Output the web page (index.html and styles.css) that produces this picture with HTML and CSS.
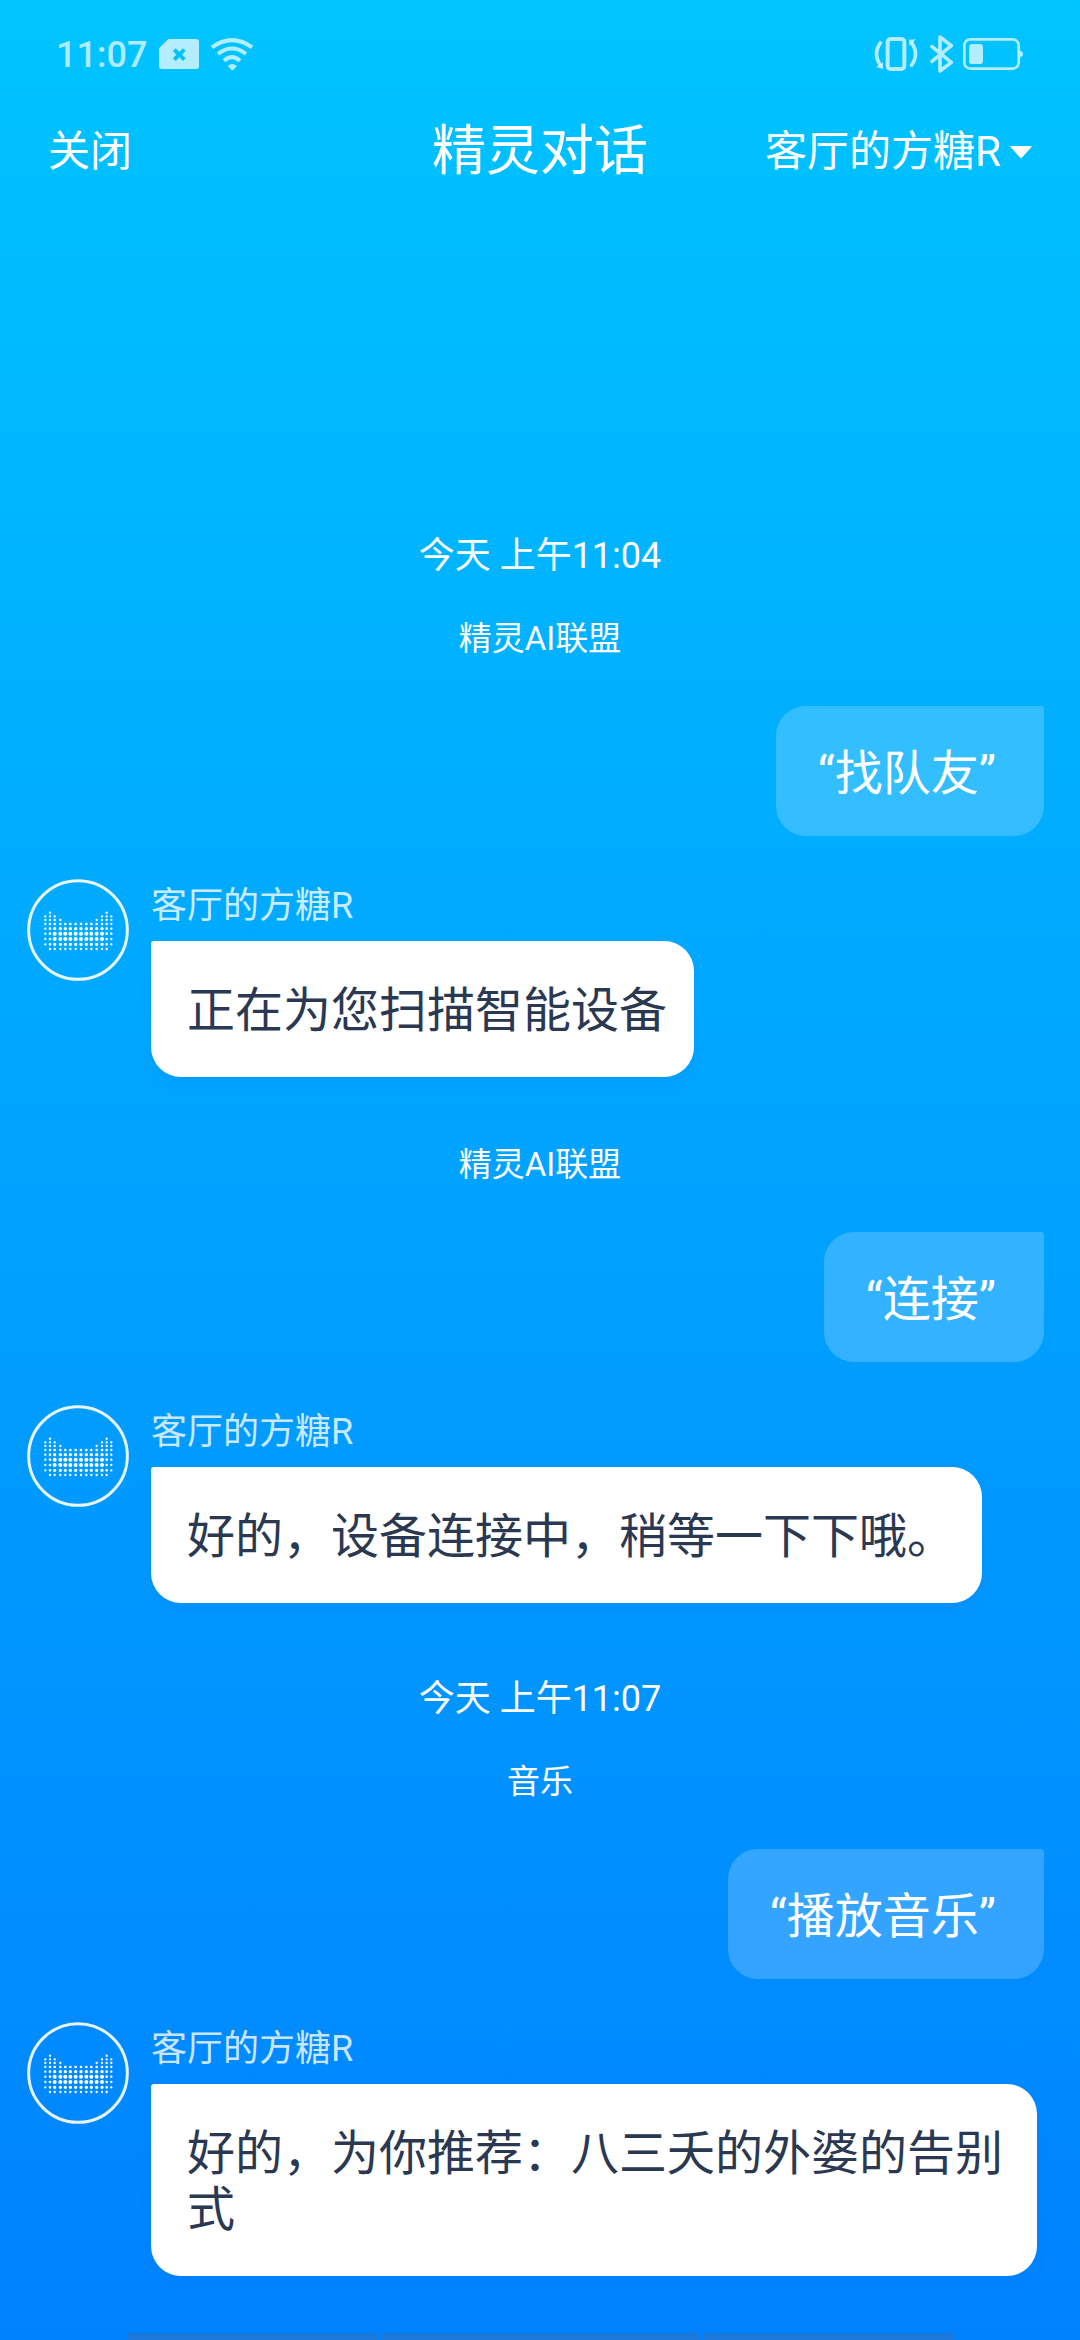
FILE: index.html
```html
<!DOCTYPE html>
<html lang="zh-CN">
<head>
<meta charset="utf-8">
<meta name="viewport" content="width=device-width, initial-scale=1">
<title>精灵对话</title>
<link rel="stylesheet" href="styles.css">
</head>
<body>
<svg class="defs" aria-hidden="true">
  <symbol id="speaker" viewBox="0 0 306 306">
    <g fill="none" stroke="#fff" stroke-linecap="round">
      <path stroke-width="7" d="M69 101h0M239 101h0M55 112h0M69 112h0M83 112h0M225 112h0M239 112h0M253 112h0M55 123h0M69 123h0M83 123h0M100 123h0M209 123h0M225 123h0M239 123h0M253 123h0M55 135h0M253 135h0M55 149h0M253 149h0M55 164h0M253 164h0M55 180h0M253 180h0M55 196h0M253 196h0"/>
      <path stroke-width="7" d="M69 210h0M83 210h0M100 210h0M115 210h0M130 210h0M146 210h0M162 210h0M178 210h0M193 210h0M209 210h0M225 210h0M239 210h0"/>
      <path stroke-width="8" d="M69 135h0M83 135h0M100 135h0M115 135h0M130 135h0M146 135h0M162 135h0M178 135h0M193 135h0M209 135h0M225 135h0M239 135h0M69 149h0M239 149h0M69 164h0M239 164h0M69 180h0M239 180h0M69 196h0M239 196h0"/>
      <path stroke-width="10" d="M83 149h0M100 149h0M115 149h0M130 149h0M146 149h0M162 149h0M178 149h0M193 149h0M209 149h0M225 149h0M83 196h0M100 196h0M115 196h0M130 196h0M146 196h0M162 196h0M178 196h0M193 196h0M209 196h0M225 196h0"/>
      <path stroke-width="12" d="M83 164h0M100 164h0M115 164h0M130 164h0M146 164h0M162 164h0M178 164h0M193 164h0M209 164h0M225 164h0M83 180h0M100 180h0M115 180h0M130 180h0M146 180h0M162 180h0M178 180h0M193 180h0M209 180h0M225 180h0"/>
    </g>
    <circle cx="153" cy="153" r="148" fill="none" stroke="#fff" stroke-opacity=".9" stroke-width="9"/>
  </symbol>
</svg>

<div class="screen">
  <div class="status">
    <div class="status-group">
      <span class="clock">11:07</span>
      <svg class="icon-sim" viewBox="0 0 120 90" aria-hidden="true"><path fill="currentColor" fill-rule="evenodd" d="M28 0H112q8 0 8 8V82q0 8-8 8H8q-8 0-8-8V28zM50 28l-8 8 10 11-10 11 8 8 11-11 11 11 8-8-11-11 11-11-8-8-11 11z"/></svg>
      <svg class="icon-wifi" viewBox="0 0 126 99" fill="none" stroke="currentColor" aria-hidden="true"><path stroke-width="12" d="M3 28Q63-15 123 28M21 48Q63 15 105 48M39 68Q63 47 87 68"/><path fill="currentColor" stroke="none" d="M50 84q13-12 28 0L64 98z"/></svg>
    </div>
    <div class="status-group status-right">
      <svg class="icon-vibrate" viewBox="0 0 132 102" fill="none" stroke="currentColor" aria-hidden="true"><rect x="41" y="6" width="50" height="90" rx="9" stroke-width="12"/><path stroke-width="11" d="M22 14Q-6 50 20 86M110 88Q138 52 112 16"/><path fill="currentColor" stroke="none" d="M6 90l21-14 0 20zM105 8l20-1-18 20z"/></svg>
      <svg class="icon-bt" viewBox="0 0 72 114" fill="none" stroke="currentColor" stroke-width="11" stroke-linejoin="round" stroke-linecap="round" aria-hidden="true"><path d="M6 35L64 82 30 108V6L64 32 6 79"/></svg>
      <svg class="icon-battery" viewBox="0 0 180 96" aria-hidden="true"><rect x="4" y="4" width="163" height="88" rx="18" fill="none" stroke="currentColor" stroke-width="8"/><rect x="18" y="18" width="42" height="60" rx="10" fill="currentColor"/><path fill="currentColor" d="M171 38q9 2 9 10t-9 10z"/></svg>
    </div>
  </div>

  <header class="header">
    <button class="bar-button" type="button">关闭</button>
    <h1 class="title">精灵对话</h1>
    <button class="bar-button device" type="button">客厅的方糖R<svg class="caret" viewBox="0 0 22 12" aria-hidden="true"><path fill="currentColor" d="M1 0H21q1 0 .5 1L12 11.500q-1 1-2 0L.5 1Q0 0 1 0z"/></svg></button>
  </header>

  <main class="chat">
    <section class="exchange">
      <time class="time">今天 上午11:04</time>
      <p class="topic">精灵AI联盟</p>
      <p class="said">“找队友”</p>
      <div class="reply">
        <svg class="avatar" aria-hidden="true"><use href="#speaker"/></svg>
        <div class="reply-body">
          <span class="name">客厅的方糖R</span>
          <p class="answer">正在为您扫描智能设备</p>
        </div>
      </div>
    </section>

    <section class="exchange">
      <p class="topic">精灵AI联盟</p>
      <p class="said">“连接”</p>
      <div class="reply">
        <svg class="avatar" aria-hidden="true"><use href="#speaker"/></svg>
        <div class="reply-body">
          <span class="name">客厅的方糖R</span>
          <p class="answer">好的，设备连接中，稍等一下下哦。</p>
        </div>
      </div>
    </section>

    <section class="exchange later">
      <time class="time">今天 上午11:07</time>
      <p class="topic">音乐</p>
      <p class="said">“播放音乐”</p>
      <div class="reply">
        <svg class="avatar" aria-hidden="true"><use href="#speaker"/></svg>
        <div class="reply-body">
          <span class="name">客厅的方糖R</span>
          <p class="answer">好的，为你推荐：八三夭的外婆的告别式</p>
        </div>
      </div>
    </section>
  </main>

  <div class="drawer" aria-hidden="true"><span></span><span></span><span></span></div>
</div>
</body>
</html>
```
FILE: styles.css
```css
* { box-sizing: border-box; }

body {
  margin: 0;
  font-family: Roboto, "Noto Sans CJK SC", sans-serif;
  color: #fff;
}

h1, p { margin: 0; font-weight: 400; }

svg { display: block; flex: none; }

.defs { position: absolute; width: 0; height: 0; }

.screen {
  display: flex;
  flex-direction: column;
  min-height: 100vh;
  background: linear-gradient(#00c4ff, #0082ff);
}

.status {
  display: flex;
  justify-content: space-between;
  align-items: center;
  height: 108px;
  padding: 0 57px 0 56px;
  color: rgba(255, 255, 255, .7);
}

.status-group { display: flex; align-items: center; gap: 12px; }
.status-right { gap: 9px; }
.clock { padding-top: 2px; font-size: 36px; font-weight: 500; line-height: 48px; }
.icon-sim { width: 40px; height: 30px; }
.icon-wifi { width: 42px; height: 33px; }
.icon-vibrate { width: 44px; height: 34px; margin-right: 3px; }
.icon-bt { width: 24px; height: 38px; }
.icon-battery { width: 60px; height: 32px; }

.header {
  display: grid;
  grid-template-columns: 1fr auto 1fr;
  align-items: center;
  height: 84px;
  padding: 4px 48px 0;
}

.title { font-size: 54px; line-height: 72px; }

.bar-button {
  justify-self: start;
  padding: 0;
  border: 0;
  background: none;
  color: inherit;
  font: inherit;
  font-size: 42px;
  line-height: 60px;
}

.device { display: flex; align-items: center; justify-self: end; gap: 9px; }
.caret { width: 22px; height: 12px; }

.chat {
  display: flex;
  flex-direction: column;
  flex: 1;
  gap: 64px;
  padding: 340px 0 57px;
}

.exchange { display: flex; flex-direction: column; }
.later { padding-top: 8px; }

.time, .topic {
  line-height: 48px;
  text-align: center;
}

.time { margin-bottom: 35px; font-size: 36px; }
.topic { margin-bottom: 43px; font-size: 33px; }

.said {
  align-self: flex-end;
  margin: 0 36px 43px;
  padding: 40px 48px 34px 42px;
  border-radius: 30px 3px 30px 30px;
  background: rgba(255, 255, 255, .2);
  font-size: 48px;
  line-height: 56px;
}

.reply { display: flex; gap: 22px; padding: 0 43px 0 27px; }
.later .reply { margin-bottom: -2px; }
.avatar { width: 102px; height: 102px; }

.reply-body {
  display: flex;
  flex: 1;
  flex-direction: column;
  align-items: flex-start;
  gap: 11px;
  padding-top: 3px;
}

.name {
  color: rgba(255, 255, 255, .8);
  font-size: 36px;
  line-height: 48px;
}

.answer {
  padding: 42px 27px 38px 36px;
  border-radius: 3px 30px 30px 30px;
  background: #fff;
  box-shadow: 0 6px 12px rgba(0, 110, 240, .12);
  color: #2b3852;
  font-size: 48px;
  line-height: 56px;
}

.drawer {
  display: grid;
  grid-template-columns: 250fr 318fr 251fr;
  gap: 4px;
  height: 7px;
  padding: 0 126px 0 127px;
}

.drawer span { background: #1c79d9; }
```
